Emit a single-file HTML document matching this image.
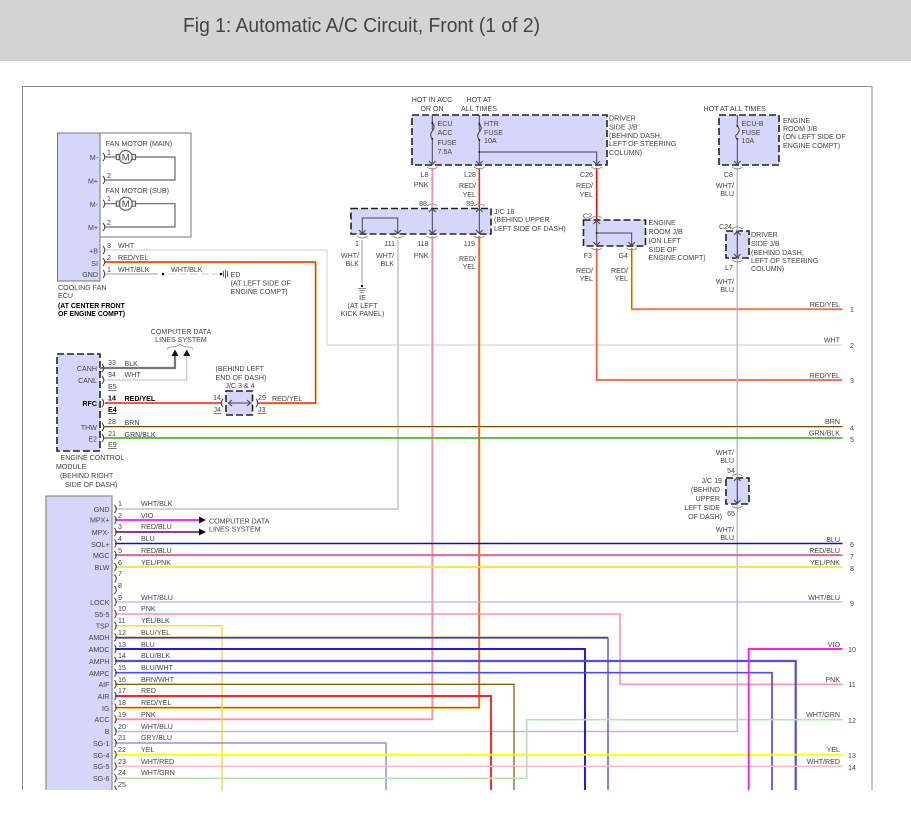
<!DOCTYPE html>
<html><head><meta charset="utf-8"><style>
html,body{margin:0;padding:0;background:#fff;width:911px;height:817px;overflow:hidden}
svg{display:block}
#d{filter:blur(.28px)}
text{font-family:"Liberation Sans",sans-serif;font-size:7.1px;fill:#444}
.b{fill:#000;font-weight:bold}
.e{text-anchor:end}
.m{text-anchor:middle}
.w{fill:none;stroke-linejoin:miter}
.box{fill:#d6d6fb;stroke:#222;stroke-width:1.6;stroke-dasharray:7 3}
.pin{fill:none;stroke:#444;stroke-width:1}
.pl{fill:none;stroke:#888;stroke-width:.8}
.in{fill:none;stroke:#444;stroke-width:1}
</style></head><body>
<svg width="911" height="817" viewBox="0 0 911 817" xmlns="http://www.w3.org/2000/svg">
<rect x="0" y="0" width="911" height="61" fill="#d3d3d3"/>
<text x="183" y="32" textLength="357" lengthAdjust="spacingAndGlyphs" style="font-size:20px;fill:#444">Fig 1: Automatic A/C Circuit, Front (1 of 2)</text>

<g id="d">
<!-- frame -->
<path d="M872 790V86.5H22.5V790" fill="none" stroke="#888" stroke-width="1"/>
<path d="M872 86V790" stroke="#aaa" stroke-width="1.4"/>

<!-- modules -->
<rect x="100" y="133" width="91" height="104" fill="#fff" stroke="#777"/>
<rect x="57.5" y="133" width="42.5" height="148" fill="#d6d6fb" stroke="#777"/>
<rect x="57" y="354" width="43" height="97" class="box"/>
<rect x="46" y="496" width="66" height="300" fill="#d6d6fb" stroke="#999" stroke-width="1.4"/>
<rect x="412" y="115" width="195" height="50" class="box"/>
<rect x="351" y="208.5" width="140" height="25.5" class="box"/>
<rect x="719" y="115" width="60" height="50" class="box"/>
<rect x="583.5" y="220" width="62" height="26" class="box"/>
<rect x="726" y="231" width="23" height="27" class="box"/>
<rect x="726" y="478" width="23" height="26" class="box"/>
<rect x="226" y="391" width="26.5" height="24" class="box"/>

<!-- long wires -->
<g class="w">
<path d="M105 250H327V345H842" stroke="#ddd" stroke-width="1.4"/>
<path d="M258 403.500H316V262.500H105" stroke="#ffd23a" stroke-width="1.4"/>
<path d="M258 403H315.500V262H105" stroke="#ee2a10" stroke-width="1.4"/>
<path d="M105 274H158" stroke="#999" stroke-width="1"/>
<path d="M168 274H218" stroke="#ccc" stroke-width="1" stroke-dasharray="8 3"/>
<path d="M362 240V283" stroke="#ccc" stroke-width="2"/>
<path d="M398 240V509H115" stroke="#ccc" stroke-width="1.8"/>
<path d="M432.300 168V208M432.300 236V719.300H115" stroke="#ff8aa8" stroke-width="1.8"/>
<path d="M479.300 168V208" stroke="#f0261a" stroke-width="1.6"/>
<path d="M479.600 236V708H115" stroke="#ffc800" stroke-width="1.5"/>
<path d="M479 236V707.500H115" stroke="#f0261a" stroke-width="1.2"/>
<path d="M596.700 168V219" stroke="#f00" stroke-width="1.5"/>
<path d="M596.700 248V380H842" stroke="#f0603a" stroke-width="1.8"/>
<path d="M632 248V309.500H842" stroke="#ffcf00" stroke-width="1.4"/>
<path d="M631.700 248V309H842.500" stroke="#e21" stroke-width="1"/>
<path d="M737.300 168V731.500H115" stroke="#b6b6f2" stroke-width="1.5"/>
<path d="M100 368H175V356" stroke="#777" stroke-width="2.200"/>
<path d="M104 380H186.700V356" stroke="#ccc" stroke-width="1.300"/>
<path d="M105 403H222" stroke="#f04020" stroke-width="1.700"/>
<path d="M104 427H842.500" stroke="#e0c060" stroke-width="1.500"/>
<path d="M104 426.500H842.500" stroke="#7c4a00" stroke-width="1"/>
<path d="M104 438H842.500" stroke="#55b040" stroke-width="1.700"/>

<path d="M115 520H199" stroke="#ff10ff" stroke-width="1.700"/>
<path d="M115 532H199" stroke="#7040c0" stroke-width="2"/>
<path d="M115 532H199" stroke="#d03050" stroke-width=".8"/>
<path d="M115 543.500H842.500" stroke="#0808f0" stroke-width="1.600"/>
<path d="M115 555.300H842.500" stroke="#b0b0f0" stroke-width="2"/>
<path d="M115 555H842.500" stroke="#ef4060" stroke-width="1.300"/>
<path d="M115 567H842.500" stroke="#fce030" stroke-width="1.700"/>
<path d="M115 602H842.500" stroke="#b4b4f0" stroke-width="1.300"/>
<path d="M115 614H620V684.300H842.500" stroke="#ff90aa" stroke-width="1.600"/>
<path d="M115 625.700H222V790" stroke="#e8e040" stroke-width="1.500"/>
<path d="M115 638H608V790" stroke="#5a5af0" stroke-width="1.500"/>
<path d="M115 637.200H608" stroke="#2020c8" stroke-width=".8"/>
<path d="M115 636.500H608" stroke="#f0e860" stroke-width=".5"/>
<path d="M115 649H585V790" stroke="#1c1cf0" stroke-width="2"/>
<path d="M115 661H795.700V790" stroke="#5050dc" stroke-width="2.200"/>
<path d="M115 672.700H772V790" stroke="#4c4cf0" stroke-width="1.700"/>
<path d="M115 684.300H514V790" stroke="#8a6010" stroke-width="1.300"/>
<path d="M115 696H491V790" stroke="#ff2020" stroke-width="1.900"/>
<path d="M115 743H386V790" stroke="#9090e0" stroke-width="1.500"/>
<path d="M115 754.700H842.500" stroke="#ffff00" stroke-width="1.800"/>
<path d="M115 766.300H842.500" stroke="#ffb4c0" stroke-width="1.300"/>
<path d="M115 778.300H526.700V719.700H842.500" stroke="#bce0b0" stroke-width="1.700"/>
<path d="M842.500 649H748.700V790" stroke="#ff20ee" stroke-width="1.900"/>
</g>

<!-- arrows -->
<path d="M199 516.500L206 520L199 523.500ZM199 528.500L206 532L199 535.500ZM171.500 356L175 349.500L178.500 356ZM183.200 356L186.700 349.500L190.200 356Z" fill="#111"/>
<path d="M167 349Q171 346 175 347L180 344.500L185 347Q190 346 193 349" class="pl"/>

<!-- fan motors -->
<g class="in" stroke-width="1.200" style="stroke:#666;stroke-width:1.200">
<path d="M105 157H116M134.500 157H175V180H105"/>
<circle cx="125.700" cy="157" r="6.500" fill="#fff"/>
<path d="M116.300 154.500h3.500v5h-3.500zM132 154.500h3.500v5h-3.500z"/>
<path d="M105 203.700H116M134.500 203.700H175V227H105"/>
<circle cx="125.700" cy="203.700" r="6.500" fill="#fff"/>
<path d="M116.300 201.200h3.500v5h-3.500zM132 201.200h3.500v5h-3.500z"/>
</g>
<text x="125.700" y="160.500" class="m" style="font-size:9.500px">M</text>
<text x="125.700" y="207.200" class="m" style="font-size:9.500px">M</text>

<!-- internal J/B -->
<g class="in">
<path d="M432.300 115V130M432.300 140V163M479.300 115V131M479.300 140V163M479.300 152H596.700V163M737.300 115V126M737.300 138V163"/>
<path d="M432.300 123Q436 127 432.300 131Q429 135 432.300 139M479.300 124Q483 128 479.300 132Q476 136 479.300 140M737.300 126Q741 130 737.300 134Q734 136 737.300 139"/>
<path d="M362.300 234V218H397.700V234M432.300 209V233M479.300 209V233M596.700 221V245M596.700 233H631.700V245M737.300 232V257M737.300 479V503M229 403H250"/>
<path d="M429 161l3.300 3.500l3.300-3.500M476 161l3.300 3.500l3.300-3.500M593.400 161l3.300 3.500l3.300-3.500M734 161l3.300 3.500l3.300-3.500M359 230l3.300 3.500l3.300-3.500M394.400 230l3.300 3.500l3.300-3.500M429 230l3.300 3.500l3.300-3.500M476 230l3.300 3.500l3.300-3.500M429 212l3.300-3.500l3.300 3.500M476 212l3.300-3.500l3.300 3.500M593.400 242l3.300 3.500l3.300-3.500M628.400 242l3.300 3.500l3.300-3.500M593.400 224l3.300-3.500l3.300 3.500M734 235l3.300-3.500l3.300 3.500M734 254l3.300 3.500l3.300-3.500M734 481l3.300-3.500l3.300 3.500M734 500l3.300 3.500l3.300-3.500M232 400l-3.500 3l3.500 3M247 400l3.500 3l-3.500 3"/>
</g>
<path d="M427 167q5.300 4 10.600 0M474 167q5.300 4 10.600 0M591.400 167q5.300 4 10.600 0M732 167q5.300 4 10.600 0M357 236q5.300 4 10.600 0M392.400 236q5.300 4 10.600 0M427 236q5.300 4 10.600 0M474 236q5.300 4 10.600 0M427 206q5.300-4 10.600 0M474 206q5.300-4 10.600 0M591.400 248q5.300 4 10.600 0M626.400 248q5.300 4 10.600 0M591.400 218q5.300-4 10.600 0M732 229q5.300-4 10.600 0M732 260q5.300 4 10.600 0M732 476q5.300-4 10.600 0M732 506q5.300 4 10.600 0" class="pl"/>
<circle cx="479.300" cy="152" r="1" fill="#222"/><circle cx="596.700" cy="233" r="1" fill="#222"/>
<circle cx="432.300" cy="123" r="1" fill="#222"/><circle cx="432.300" cy="139" r="1" fill="#222"/><circle cx="479.300" cy="124" r="1" fill="#222"/><circle cx="479.300" cy="140" r="1" fill="#222"/><circle cx="737.300" cy="126" r="1" fill="#222"/><circle cx="737.300" cy="139" r="1" fill="#222"/>

<!-- grounds -->
<circle cx="163" cy="274" r="1.300" fill="#111"/><circle cx="221" cy="274" r="1.300" fill="#111"/>
<path d="M223.500 271v6M225.500 269.500v9M227.500 271v6" stroke="#666" stroke-width="1" fill="none"/>
<circle cx="362" cy="286" r="1.200" fill="#111"/>
<path d="M358 288.500h8M359 290.500h6M360.500 292.500h3" stroke="#666" stroke-width=".8" fill="none"/>

<!-- pin brackets -->
<g class="pin">
<path d="M103 153q3.500 4 0 8M103 176q3.500 4 0 8M103 199.700q3.500 4 0 8M103 223q3.500 4 0 8M103 246q3.500 4 0 8M103 258q3.500 4 0 8M103 270q3.500 4 0 8"/>
<path d="M102 364q3.500 4 0 8M102 376q3.500 4 0 8M102 399q3.500 4 0 8M102 423q3.500 4 0 8M102 434q3.500 4 0 8"/>
<path d="M223 399q-3.500 4 0 8M256 399q3.500 4 0 8"/>
<path d="M114.500 505q3.500 4 0 8M114.500 516q3.500 4 0 8M114.500 528q3.500 4 0 8M114.500 539.500q3.500 4 0 8M114.500 551q3.500 4 0 8M114.500 563q3.500 4 0 8M114.500 574.500q3.500 4 0 8M114.500 586q3.500 4 0 8M114.500 598q3.500 4 0 8M114.500 610q3.500 4 0 8M114.500 621.700q3.500 4 0 8M114.500 633.400q3.500 4 0 8M114.500 645q3.500 4 0 8M114.500 657q3.500 4 0 8M114.500 668.700q3.500 4 0 8M114.500 680.300q3.500 4 0 8M114.500 692q3.500 4 0 8M114.500 703.600q3.500 4 0 8M114.500 715.300q3.500 4 0 8M114.500 727.500q3.500 4 0 8M114.500 739q3.500 4 0 8M114.500 750.700q3.500 4 0 8M114.500 762.300q3.500 4 0 8M114.500 774.300q3.500 4 0 8M114.500 786q3.500 4 0 8"/>
</g>

<!-- fan ECU text -->
<text x="105.700" y="146">FAN MOTOR (MAIN)</text>
<text x="105.700" y="193">FAN MOTOR (SUB)</text>
<text x="98" y="160" class="e">M-</text><text x="98" y="183.500" class="e">M+</text>
<text x="98" y="207" class="e">M-</text><text x="98" y="230" class="e">M+</text>
<text x="98" y="253.500" class="e">+B</text><text x="98" y="266" class="e">SI</text><text x="98" y="277" class="e">GND</text>
<text x="107" y="155">1</text><text x="107" y="178">2</text><text x="107" y="201">1</text><text x="107" y="225">2</text>
<text x="107" y="248">3</text><text x="107" y="260">2</text><text x="107" y="272">1</text>
<text x="118" y="248">WHT</text><text x="118" y="260">RED/YEL</text><text x="118" y="272">WHT/BLK</text><text x="171" y="272">WHT/BLK</text>
<text x="58" y="290">COOLING FAN</text><text x="58" y="298">ECU</text>
<text x="58" y="308" class="b" style="font-size:6.900px">(AT CENTER FRONT</text><text x="58" y="316" class="b" style="font-size:6.900px">OF ENGINE COMPT)</text>
<text x="230.500" y="277">ED</text><text x="230.500" y="285.500">(AT LEFT SIDE OF</text><text x="230.500" y="294">ENGINE COMPT)</text>

<!-- top text -->
<text x="432" y="102" class="m">HOT IN ACC</text><text x="432" y="111" class="m">OR ON</text>
<text x="479" y="102" class="m">HOT AT</text><text x="479" y="111" class="m">ALL TIMES</text>
<text x="437.500" y="126">ECU</text><text x="437.500" y="135">ACC</text><text x="437.500" y="145">FUSE</text><text x="437.500" y="154">7.5A</text>
<text x="484" y="126">HTR</text><text x="484" y="135">FUSE</text><text x="484" y="143">10A</text>
<text x="609" y="120.500">DRIVER</text><text x="609" y="129.500">SIDE J/B</text><text x="609" y="138">(BEHIND DASH,</text><text x="609" y="146">LEFT OF STEERING</text><text x="609" y="155">COLUMN)</text>
<text x="428.500" y="177" class="e">L8</text><text x="428.500" y="187" class="e">PNK</text>
<text x="476" y="177" class="e">L28</text><text x="476" y="188" class="e">RED/</text><text x="476" y="197" class="e">YEL</text>
<text x="593" y="177" class="e">C26</text><text x="593" y="188" class="e">RED/</text><text x="593" y="197" class="e">YEL</text>
<text x="427" y="206" class="e">88</text><text x="474" y="206" class="e">89</text>
<text x="494" y="214">J/C 18</text><text x="494" y="222">(BEHIND UPPER</text><text x="494" y="231">LEFT SIDE OF DASH)</text>
<text x="359" y="246" class="e">1</text><text x="395" y="246" class="e">111</text><text x="428.500" y="246" class="e">118</text><text x="475" y="246" class="e">119</text>
<text x="359" y="258" class="e">WHT/</text><text x="359" y="266" class="e">BLK</text><text x="394" y="258" class="e">WHT/</text><text x="394" y="266" class="e">BLK</text>
<text x="428.500" y="258" class="e">PNK</text><text x="476" y="261" class="e">RED/</text><text x="476" y="269" class="e">YEL</text>
<text x="362.500" y="300" class="m">IE</text><text x="362.500" y="308" class="m">(AT LEFT</text><text x="362.500" y="316" class="m">KICK PANEL)</text>
<text x="592" y="218.500" class="e">C2</text><text x="592" y="258" class="e">F3</text><text x="628" y="258" class="e">G4</text>
<text x="593" y="273" class="e">RED/</text><text x="593" y="281" class="e">YEL</text><text x="628" y="273" class="e">RED/</text><text x="628" y="281" class="e">YEL</text>
<text x="648.500" y="225">ENGINE</text><text x="648.500" y="234">ROOM J/B</text><text x="648.500" y="243">(ON LEFT</text><text x="648.500" y="252">SIDE OF</text><text x="648.500" y="260">ENGINE COMPT)</text>
<text x="703.500" y="111">HOT AT ALL TIMES</text>
<text x="741.500" y="126">ECU-B</text><text x="741.500" y="135">FUSE</text><text x="741.500" y="143">10A</text>
<text x="783" y="123">ENGINE</text><text x="783" y="131">ROOM J/B</text><text x="783" y="139">(ON LEFT SIDE OF</text><text x="783" y="148">ENGINE COMPT)</text>
<text x="733" y="177" class="e">C8</text><text x="734" y="188" class="e">WHT/</text><text x="734" y="196" class="e">BLU</text>
<text x="732" y="229" class="e">C24</text>
<text x="751" y="237">DRIVER</text><text x="751" y="246">SIDE J/B</text><text x="751" y="255">(BEHIND DASH,</text><text x="751" y="263">LEFT OF STEERING</text><text x="751" y="271">COLUMN)</text>
<text x="733" y="270" class="e">L7</text><text x="734" y="284" class="e">WHT/</text><text x="734" y="292" class="e">BLU</text>

<!-- ECM text -->
<text x="181" y="334" class="m">COMPUTER DATA</text><text x="181" y="342" class="m">LINES SYSTEM</text>
<text x="97" y="371" class="e">CANH</text><text x="97" y="383" class="e">CANL</text>
<text x="97" y="406" class="e b">RFC</text><text x="97" y="430" class="e">THW</text><text x="97" y="441.500" class="e">E2</text>
<text x="108" y="365">33</text><text x="108" y="377">34</text><text x="108" y="389" text-decoration="underline">E5</text>
<text x="108" y="400.500" class="b">14</text><text x="108" y="412" class="b" text-decoration="underline">E4</text>
<text x="108" y="424">28</text><text x="108" y="436">21</text><text x="108" y="447" text-decoration="underline">E9</text>
<text x="124.500" y="366">BLK</text><text x="124.500" y="377">WHT</text><text x="124.500" y="401" class="b">RED/YEL</text><text x="124.500" y="425">BRN</text><text x="124.500" y="437">GRN/BLK</text>
<text x="215.500" y="371">(BEHIND LEFT</text><text x="215.500" y="380">END OF DASH)</text><text x="240" y="388" class="m">J/C 3 &amp; 4</text>
<text x="221" y="400" class="e">14</text><text x="221" y="412" class="e" text-decoration="underline">J4</text>
<text x="258" y="400">29</text><text x="258" y="412" text-decoration="underline">J3</text><text x="272" y="401">RED/YEL</text>
<text x="60.500" y="460">ENGINE CONTROL</text><text x="56" y="469">MODULE</text><text x="60" y="478">(BEHIND RIGHT</text><text x="65" y="487">SIDE OF DASH)</text>

<!-- big module labels -->
<g>
<text x="109.500" y="512" class="e">GND</text><text x="109.500" y="522.500" class="e">MPX+</text><text x="109.500" y="535" class="e">MPX-</text><text x="109.500" y="547" class="e">SOL+</text><text x="109.500" y="558" class="e">MGC</text><text x="109.500" y="570" class="e">BLW</text><text x="109.500" y="605" class="e">LOCK</text><text x="109.500" y="617" class="e">S5-5</text><text x="109.500" y="628.500" class="e">TSP</text><text x="109.500" y="640" class="e">AMDH</text><text x="109.500" y="652" class="e">AMDC</text><text x="109.500" y="664" class="e">AMPH</text><text x="109.500" y="676" class="e">AMPC</text><text x="109.500" y="687" class="e">AIF</text><text x="109.500" y="699" class="e">AIR</text><text x="109.500" y="711" class="e">IG</text><text x="109.500" y="722" class="e">ACC</text><text x="109.500" y="734" class="e">B</text><text x="109.500" y="746" class="e">SG-1</text><text x="109.500" y="758" class="e">SG-4</text><text x="109.500" y="769" class="e">SG-5</text><text x="109.500" y="781" class="e">SG-6</text>
</g>
<text x="118" y="506">1</text><text x="118" y="518">2</text><text x="118" y="529">3</text><text x="118" y="541">4</text><text x="118" y="553">5</text><text x="118" y="565">6</text><text x="118" y="576">7</text><text x="118" y="588">8</text><text x="118" y="600">9</text><text x="118" y="611">10</text><text x="118" y="623">11</text><text x="118" y="635">12</text><text x="118" y="647">13</text><text x="118" y="658">14</text><text x="118" y="670">15</text><text x="118" y="682">16</text><text x="118" y="693">17</text><text x="118" y="705">18</text><text x="118" y="717">19</text><text x="118" y="729">20</text><text x="118" y="740">21</text><text x="118" y="752">22</text><text x="118" y="764">23</text><text x="118" y="775">24</text><text x="118" y="787">25</text>
<text x="141" y="506">WHT/BLK</text><text x="141" y="518">VIO</text><text x="141" y="529">RED/BLU</text><text x="141" y="541">BLU</text><text x="141" y="553">RED/BLU</text><text x="141" y="565">YEL/PNK</text><text x="141" y="600">WHT/BLU</text><text x="141" y="611">PNK</text><text x="141" y="623">YEL/BLK</text><text x="141" y="635">BLU/YEL</text><text x="141" y="647">BLU</text><text x="141" y="658">BLU/BLK</text><text x="141" y="670">BLU/WHT</text><text x="141" y="682">BRN/WHT</text><text x="141" y="693">RED</text><text x="141" y="705">RED/YEL</text><text x="141" y="717">PNK</text><text x="141" y="729">WHT/BLU</text><text x="141" y="740">GRY/BLU</text><text x="141" y="752">YEL</text><text x="141" y="764">WHT/RED</text><text x="141" y="775">WHT/GRN</text>
<text x="209" y="523.500">COMPUTER DATA</text><text x="209" y="531.500">LINES SYSTEM</text>

<!-- JC19 -->
<text x="734" y="455" class="e">WHT/</text><text x="734" y="463" class="e">BLU</text><text x="735" y="473" class="e">54</text>
<text x="722" y="483" class="e">J/C 19</text><text x="720" y="492" class="e">(BEHIND</text><text x="720" y="501" class="e">UPPER</text><text x="720" y="510" class="e">LEFT SIDE</text><text x="722" y="519" class="e">OF DASH)</text>
<text x="735" y="516" class="e">65</text><text x="734" y="532" class="e">WHT/</text><text x="734" y="540" class="e">BLU</text>

<!-- right labels -->
<text x="840" y="307" class="e">RED/YEL</text><text x="840" y="342.500" class="e">WHT</text><text x="840" y="378" class="e">RED/YEL</text><text x="840" y="424" class="e">BRN</text><text x="840" y="435.500" class="e">GRN/BLK</text><text x="840" y="542" class="e">BLU</text><text x="840" y="553" class="e">RED/BLU</text><text x="840" y="565" class="e">YEL/PNK</text><text x="840" y="600" class="e">WHT/BLU</text><text x="840" y="647" class="e">VIO</text><text x="840" y="682" class="e">PNK</text><text x="840" y="717" class="e">WHT/GRN</text><text x="840" y="752" class="e">YEL</text><text x="840" y="764" class="e">WHT/RED</text>
<g>
<text x="852" y="312" class="m">1</text><text x="852" y="348" class="m">2</text><text x="852" y="383" class="m">3</text><text x="852" y="430.500" class="m">4</text><text x="852" y="442" class="m">5</text><text x="852" y="547" class="m">6</text><text x="852" y="559" class="m">7</text><text x="852" y="571" class="m">8</text><text x="852" y="606" class="m">9</text><text x="852" y="652" class="m">10</text><text x="852" y="687" class="m">11</text><text x="852" y="723" class="m">12</text><text x="852" y="758" class="m">13</text><text x="852" y="770" class="m">14</text>
</g>
</g>

<rect x="0" y="790" width="911" height="27" fill="#fff"/>
</svg>
</body></html>
